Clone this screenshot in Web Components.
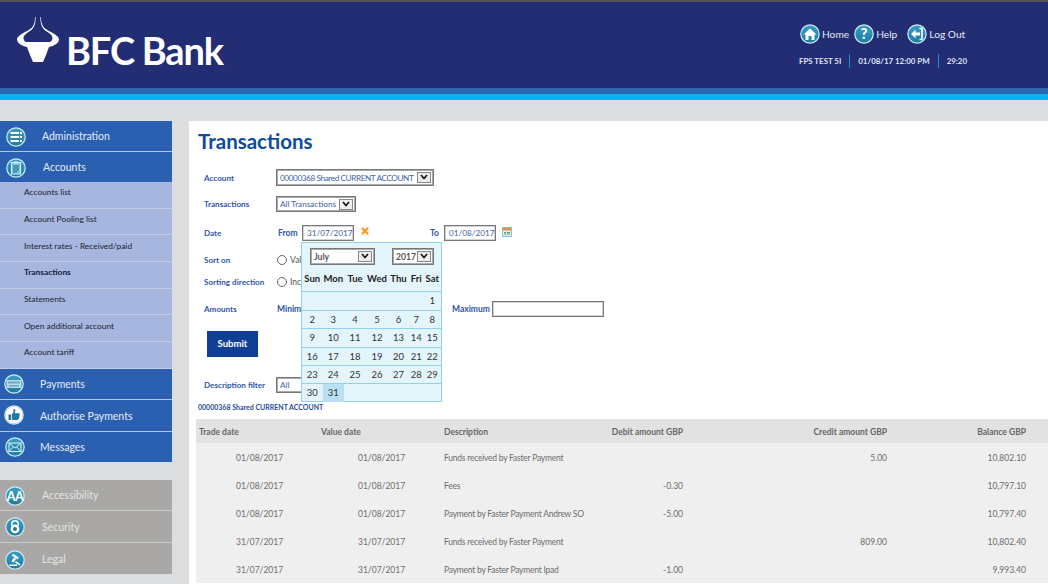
<!DOCTYPE html>
<html lang="en">
<head>
<meta charset="utf-8">
<title>BFC Bank - Transactions</title>
<style>
html,body{margin:0;padding:0}
body{width:1048px;height:584px;overflow:hidden;background:#dcddde;font-family:Lato,"Liberation Sans",sans-serif}
.layout{display:flex;padding-top:21px;height:463px;gap:17px}
</style>
</head>
<body>
<bfc-header></bfc-header>
<div class="layout">
  <bfc-sidebar>
    <bfc-nav icon="admin" pad="42" ix="6" iy="5.500" style="height:31px">Administration</bfc-nav>
    <bfc-nav icon="accounts" pad="43" ix="6" iy="6" flat>Accounts</bfc-nav>
    <bfc-sub>Accounts list</bfc-sub>
    <bfc-sub>Account Pooling list</bfc-sub>
    <bfc-sub>Interest rates - Received/paid</bfc-sub>
    <bfc-sub active>Transactions</bfc-sub>
    <bfc-sub>Statements</bfc-sub>
    <bfc-sub>Open additional account</bfc-sub>
    <bfc-sub>Account tariff</bfc-sub>
    <bfc-nav icon="payments" pad="40" ix="4" iy="5">Payments</bfc-nav>
    <bfc-nav icon="thumb" pad="40" ix="4" iy="5">Authorise Payments</bfc-nav>
    <bfc-nav icon="mail" pad="40" ix="4.500" iy="5.500" flat>Messages</bfc-nav>
    <bfc-nav icon="aa" pad="42" ix="5" iy="6" tone="grey" style="margin-top:18px">Accessibility</bfc-nav>
    <bfc-nav icon="lock" pad="42" ix="5" iy="5.500" tone="grey">Security</bfc-nav>
    <bfc-nav icon="gavel" pad="42" ix="5" iy="7" tone="grey" flat style="height:31px;padding-top:1px">Legal</bfc-nav>
  </bfc-sidebar>
  <bfc-main></bfc-main>
</div>
<script>
const ICONS={
 home:'<path d="M10 4.5 3.5 10.5H5.5V16H8.5V12H11.5V16H14.5V10.5H16.5Z" fill="#fff"/>',
 help:'<text x="10" y="15.4" text-anchor="middle" font-family="Lato,sans-serif" font-weight="900" font-size="15" fill="#fff">?</text>',
 logout:'<path d="M12.5 4.5H15V15.5H12.5" fill="none" stroke="#fff" stroke-width="1.6"/><path d="M4 10 8.5 5.8V8.6H13V11.4H8.5V14.2Z" fill="#fff"/>',
 admin:'<g fill="#fff"><rect x="4.5" y="5" width="8.5" height="2"/><rect x="14" y="5" width="2" height="2"/><rect x="4.5" y="9" width="8.5" height="2"/><rect x="14" y="9" width="2" height="2"/><rect x="4.5" y="13" width="8.5" height="2"/><rect x="14" y="13" width="2" height="2"/></g>',
 accounts:'<rect x="5.5" y="4.5" width="9" height="11.5" fill="#7fc0d6" stroke="#d5edf4"/><rect x="8" y="3.5" width="4" height="2" fill="#d5edf4"/><path d="M7 8h6M7 10h6M7 12h6M7 14h4" stroke="#1a6e91" stroke-width="1"/>',
 payments:'<rect x="2.5" y="6" width="15" height="8" fill="#b9dbe4"/><rect x="4" y="7.5" width="12" height="2" fill="#6ea8bd"/><rect x="5" y="11" width="10" height="1.5" fill="#6ea8bd"/>',
 thumb:'<circle cx="10" cy="10" r="8.6" fill="#fff"/><path d="M4.5 9.5H7V15H4.5Z M7.8 9.5 9.5 7V3.8C11 3.8 11.6 5 11.2 6.4L10.8 8.2H15C16 8.2 16 9.6 15.4 10 16 10.6 15.8 11.6 15.1 11.9 15.5 12.6 15.2 13.4 14.5 13.6 14.7 14.4 14.2 15 13.5 15H9.2L7.8 14.4Z" fill="#2277a3"/>',
 mail:'<rect x="4" y="6" width="12" height="8.5" fill="none" stroke="#d5edf4" stroke-width="1.1"/><path d="M4 6 10 11 16 6M4 14.5 8.4 9.8M16 14.5 11.6 9.8" fill="none" stroke="#d5edf4" stroke-width="1"/>',
 aa:'<text x="10" y="14.6" text-anchor="middle" font-family="Lato,sans-serif" font-weight="900" font-size="12.5" letter-spacing="-.6" fill="#fff">AA</text>',
 lock:'<path d="M6.8 9V7a3.2 3.2 0 0 1 6.4 0V9" fill="none" stroke="#fff" stroke-width="1.5"/><circle cx="10" cy="12" r="4.4" fill="#fff"/><circle cx="10" cy="12" r="2" fill="#2277a3"/>',
 gavel:'<path d="M8 3.8 13.8 7.6 12.6 9.4 6.8 5.6Z M9 7.6 11.2 9 8.4 12.5 6.4 11.2Z M4.5 16V14.4H12V16Z M11 11 15.6 14.4 14.6 15.6 10 12.4Z" fill="#fff"/>'
};
const circle=(name,size)=>`<svg xmlns="http://www.w3.org/2000/svg" width="${size}" height="${size}" viewBox="0 0 20 20"><defs><linearGradient id="g" x1="0" y1="0" x2="0" y2="1"><stop offset="0" stop-color="#3a9fc4"/><stop offset="1" stop-color="#1b7ba3"/></linearGradient></defs><circle cx="10" cy="10" r="9.2" fill="url(#g)" stroke="#cfe9f2" stroke-width="1.2"/>${ICONS[name]}</svg>`;

class Base extends HTMLElement{
  constructor(){super();this.attachShadow({mode:'open'});}
}
customElements.define('bfc-header',class extends Base{
  connectedCallback(){this.shadowRoot.innerHTML=`<style>
  :host{display:block;height:100px;background:#232d73;box-sizing:border-box;border-top:2px solid #55565a;position:relative}
  .top{height:86px;box-sizing:border-box;display:flex;justify-content:space-between;padding:15px 80px 0 17px}
  .logo{display:flex;align-items:flex-start;gap:5px;color:#fff}
  .logo svg{display:block}
  .logo span{font:700 38px/44px Lato,sans-serif;letter-spacing:-1.2px;margin-top:11px;white-space:nowrap}
  .right{display:flex;flex-direction:column;gap:10px;padding-top:7px;width:169px;color:#fff}
  .links{display:flex;font:10.200px/20px Lato,sans-serif;color:#e6e9f4;white-space:nowrap;margin-left:1px}
  .links a{display:flex;align-items:center;gap:2px}
  .links a+a{margin-left:5px}.links a:last-child{margin-left:10px}
  .links svg{display:block}
  .info{display:flex;font:700 7.900px/14px Lato,sans-serif;color:#dfe3f2;white-space:nowrap}
  .info span+span{border-left:1px solid #1c8fc7;margin-left:8px;padding-left:8px}
  .b1{height:6px;background:#2b66b0}.b2{height:6px;background:#00b4ec}
  </style>
  <div class="top">
    <div class="logo"><svg width="44" height="47" viewBox="17 17 44 47"><path fill="#fff" d="M35 17C35 27 31 29 25 32 20 35 17 37 17 39.5 17 43 22 46 27 47L30 55 33 62H43L46 55 49 47C54 46 59 43 59 39.5 59 37 56 35 51 32 45 29 41 27 41 17L40.4 17C40 27 44 30 49 33 53.500 36 53.500 40 50 42H26C22.500 40 22.500 36 27 33 32 30 36 27 35.600 17Z"/></svg><span>BFC Bank</span></div>
    <div class="right">
      <div class="links"><a>${circle('home',20)}Home</a><a>${circle('help',20)}Help</a><a>${circle('logout',20)}Log Out</a></div>
      <div class="info"><span>FPS TEST 5I</span><span>01/08/17 12:00 PM</span><span>29:20</span></div>
    </div>
  </div>
  <div class="b1"></div><div class="b2"></div>`;}
});
customElements.define('bfc-sidebar',class extends Base{
  constructor(){super();this.shadowRoot.innerHTML=`<style>:host{display:flex;flex-direction:column;width:172px;flex:none}</style><slot></slot>`;}
});
customElements.define('bfc-nav',class extends Base{
  connectedCallback(){
    const grey=this.getAttribute('tone')==='grey';
    const flat=this.hasAttribute('flat');
    const icon=this.getAttribute('icon');
    const pad=+this.getAttribute('pad');
    const ix=this.getAttribute('ix'),iy=this.getAttribute('iy');
    this.shadowRoot.innerHTML=`<style>
    :host{display:flex;align-items:center;box-sizing:border-box;height:${flat?30:31.5}px;flex:none;background:${grey?'#a9a8a6':'#2b60b0'};color:${grey?'#e4e4e2':'#e6ecf7'};font:10.500px/30px Lato,sans-serif;position:relative;${flat?'':`border-bottom:1.500px solid ${grey?'#c9c9c8':'#b5c4e0'};`}white-space:nowrap}
    svg{position:absolute;left:${ix}px;top:${iy}px;display:block}
    span{padding-left:${pad}px}
    </style>${circle(icon,20)}<span><slot></slot></span>`;
  }
});
customElements.define('bfc-sub',class extends Base{
  connectedCallback(){
    this.shadowRoot.innerHTML=`<style>
    :host{display:flex;align-items:center;box-sizing:border-box;height:26.700px;flex:none;padding:0 0 5px 24px;background:#a6b6de;border-bottom:1.500px solid #c2cde8;color:#1c2233;font:8.400px/12px Lato,sans-serif;white-space:nowrap}
    :host([active]){font-weight:700;color:#111c44}
    </style><slot></slot>`;
  }
});
customElements.define('bfc-select',class extends Base{
  connectedCallback(){
    const w=this.getAttribute('w'),h=this.getAttribute('h')||17;
    const c=this.getAttribute('cal')!==null;
    const ls=this.getAttribute('ls')||0;
    this.shadowRoot.innerHTML=`<style>
    :host{display:flex;align-items:center;justify-content:space-between;box-sizing:border-box;width:${w}px;height:${h}px;flex:none;border:1px solid #777;box-shadow:inset 0 0 0 1px #aaa;background:#fff;color:${c?'#555':'#3a5fae'};font:${c?'700 8.600px':'8.200px'}/12px Lato,sans-serif;letter-spacing:${ls}px;padding:0 2px 0 3px;white-space:nowrap}
    i{display:block;width:14px;height:11px;box-sizing:border-box;border:1px solid #888;background:#eee;flex:none}
    svg{display:block;margin:1px auto 0}
    </style><span><slot></slot></span><i><svg width="8" height="6" viewBox="0 0 8 6"><path d="M1 1 4 4.500 7 1" fill="none" stroke="#111" stroke-width="1.600"/></svg></i>`;
  }
});
customElements.define('bfc-input',class extends Base{
  connectedCallback(){
    const w=this.getAttribute('w');
    this.shadowRoot.innerHTML=`<style>
    :host{display:flex;align-items:center;box-sizing:border-box;width:${w}px;height:16px;flex:none;border:1px solid #777;box-shadow:inset 0 0 0 .5px #aaa;background:#fff;color:#3a5fae;font:8.200px/12px Lato,sans-serif;padding-left:4px;white-space:nowrap}
    </style><slot></slot>`;
  }
});
customElements.define('bfc-calendar',class extends Base{
  connectedCallback(){
    const heads=['Sun','Mon','Tue','Wed','Thu','Fri','Sat'];
    const weeks=[['','','','','','','1'],['2','3','4','5','6','7','8'],['9','10','11','12','13','14','15'],['16','17','18','19','20','21','22'],['23','24','25','26','27','28','29'],['30','31','','','','','']];
    const hs=[19,18,19,18,18,19];
    this.shadowRoot.innerHTML=`<style>
    :host{display:block;position:absolute;left:112px;top:121px;width:141px;box-sizing:border-box;border:1px solid #8fd4ec;background:#e4f4fb;color:#333;font:9.500px/18px Lato,sans-serif;height:160px}
    .sel{display:flex;padding:5px 7px 0 8px;gap:17px}
    .row{display:grid;grid-template-columns:20.500px 21.500px 22px 22px 21px 14.500px 17.500px;text-align:center;align-items:center}
    .heads{font-weight:700;color:#222;font-size:9.500px;margin-top:3px;height:23px;padding-bottom:2px;box-sizing:border-box}
    .week{border-top:1px solid #8fd4ec;box-sizing:border-box}
    .on{background:#b9e1f2;align-self:stretch;line-height:18px}
    </style>
    <div class="sel"><bfc-select w="65" cal>July</bfc-select><bfc-select w="42" cal>2017</bfc-select></div>
    <div class="row heads">${heads.map(d=>`<span>${d}</span>`).join('')}</div>
    ${weeks.map((w,i)=>`<div class="row week" style="height:${hs[i]}px">${w.map(d=>`<span class="${d==='31'?'on':''}">${d}</span>`).join('')}</div>`).join('')}`;
  }
});
customElements.define('bfc-row',class extends Base{
  connectedCallback(){
    const head=this.hasAttribute('head');
    const cells=(this.getAttribute('cells')||'').split('|');
    this.shadowRoot.innerHTML=`<style>
    :host{display:grid;box-sizing:border-box;padding-top:2px;grid-template-columns:122px 123px 150px 96px 204px 139px;height:${head?24:28}px;align-items:center;background:${head?'#e2e2e2':'transparent'};color:${head?'#666':'#6d6d6d'};font:${head?'700 ':''}8.500px/12px Lato,sans-serif}
    span{padding-right:4px;box-sizing:border-box;white-space:nowrap}
    .d{padding-left:${head?3:40}px}.t{padding-left:3px;letter-spacing:${head?0:-.23}px}.n{text-align:right}
    </style>
    <span class="d">${cells[0]}</span><span class="d">${cells[1]}</span><span class="t">${cells[2]}</span><span class="n">${cells[3]}</span><span class="n">${cells[4]}</span><span class="n">${cells[5]}</span>`;
  }
});
customElements.define('bfc-main',class extends Base{
  connectedCallback(){
    this.shadowRoot.innerHTML=`<style>
    :host{display:block;flex:1;background:#fff;position:relative;overflow:hidden;height:463px;color:#2e56a8;font:8.500px/12px Lato,sans-serif;white-space:nowrap}
    h1{margin:0;height:48px;padding:6px 0 0 9px;box-sizing:border-box;font:700 20.500px/28px Lato,sans-serif;color:#0e4a9e}
    .r{display:flex;align-items:center;padding-left:15px}
    b.l{width:72px;flex:none;font-weight:700;font-size:8.100px}
    b{font-weight:700}
    .radio{width:8px;height:8px;border:1px solid #666;border-radius:50%;background:#fff;flex:none;margin:0 3px 0 1px}
    .opt{color:#555}
    .sub{display:block;width:51px;height:26px;margin:14px 0 0 18px;background:#0e3f94;color:#fff;font:700 9.500px/26px Lato,sans-serif;text-align:center;border:0;padding:0}
    .cap{font-weight:700;font-size:7px;line-height:12px;height:12px;margin:8px 0 6px 9px;color:#1f4ba0}
    .tbl{margin-left:7px;background:#efefef;height:164px}
    </style>
    <h1>Transactions</h1>
    <div class="r" style="height:17px"><b class="l">Account</b><bfc-select w="158" ls="-.4">00000368 Shared CURRENT ACCOUNT</bfc-select></div>
    <div class="r" style="height:16px;margin-top:10px"><b class="l">Transactions</b><bfc-select w="80" h="16">All Transactions</bfc-select></div>
    <div class="r" style="height:16px;margin-top:13px"><b class="l">Date</b>
      <b style="width:26px;padding-left:2px;box-sizing:border-box;flex:none">From</b><bfc-input w="52">31/07/2017</bfc-input>
      <svg style="margin-left:6px;flex:none;margin-top:-4px" width="10" height="10" viewBox="0 0 10 10"><rect width="10" height="10" fill="#f7f7f0"/><path d="M2 2 8 8M8 2 2 8" stroke="#f0a020" stroke-width="2.200"/></svg>
      <b style="margin-left:60px;width:14px;flex:none">To</b><bfc-input w="52">01/08/2017</bfc-input>
      <svg style="margin-left:6px;flex:none;margin-top:-2px" width="10" height="10" viewBox="0 0 10 10"><rect x=".5" y=".5" width="9" height="9" fill="#dff0f8" stroke="#8fbcd8"/><rect x="1" y="1" width="8" height="2.500" fill="#e8913a"/><rect x="2" y="5" width="2" height="1.500" fill="#5aa04a"/><rect x="5" y="5" width="3" height="1.500" fill="#5aa04a"/><rect x="2" y="7" width="6" height="1" fill="#8fbcd8"/></svg>
    </div>
    <div class="r" style="height:16px;margin-top:11px"><b class="l">Sort on</b><i class="radio"></i><span class="opt">Val</span></div>
    <div class="r" style="height:16px;margin-top:6px"><b class="l">Sorting direction</b><i class="radio"></i><span class="opt">Inc</span></div>
    <div class="r" style="height:16px;margin-top:11px"><b class="l">Amounts</b><b style="width:175px;padding-left:1px;box-sizing:border-box;flex:none">Minim</b><b style="width:40px;flex:none;padding-left:1px;box-sizing:border-box">Maximum</b><span style="width:1px;flex:none"></span><bfc-input w="112"></bfc-input></div>
    <button class="sub">Submit</button>
    <div class="r" style="height:16px;margin-top:20px"><b class="l">Description filter</b><bfc-select w="80" h="16">All</bfc-select></div>
    <div class="cap">00000368 Shared CURRENT ACCOUNT</div>
    <div class="tbl">
      <bfc-row head cells="Trade date|Value date|Description|Debit amount GBP|Credit amount GBP|Balance GBP"></bfc-row>
      <bfc-row cells="01/08/2017|01/08/2017|Funds received by Faster Payment||5.00|10,802.10"></bfc-row>
      <bfc-row cells="01/08/2017|01/08/2017|Fees|-0.30||10,797.10"></bfc-row>
      <bfc-row cells="01/08/2017|01/08/2017|Payment by Faster Payment Andrew SO|-5.00||10,797.40"></bfc-row>
      <bfc-row cells="31/07/2017|31/07/2017|Funds received by Faster Payment||809.00|10,802.40"></bfc-row>
      <bfc-row cells="31/07/2017|31/07/2017|Payment by Faster Payment Ipad|-1.00||9,993.40"></bfc-row>
    </div>
    <bfc-calendar></bfc-calendar>`;
  }
});
</script>
</body>
</html>
